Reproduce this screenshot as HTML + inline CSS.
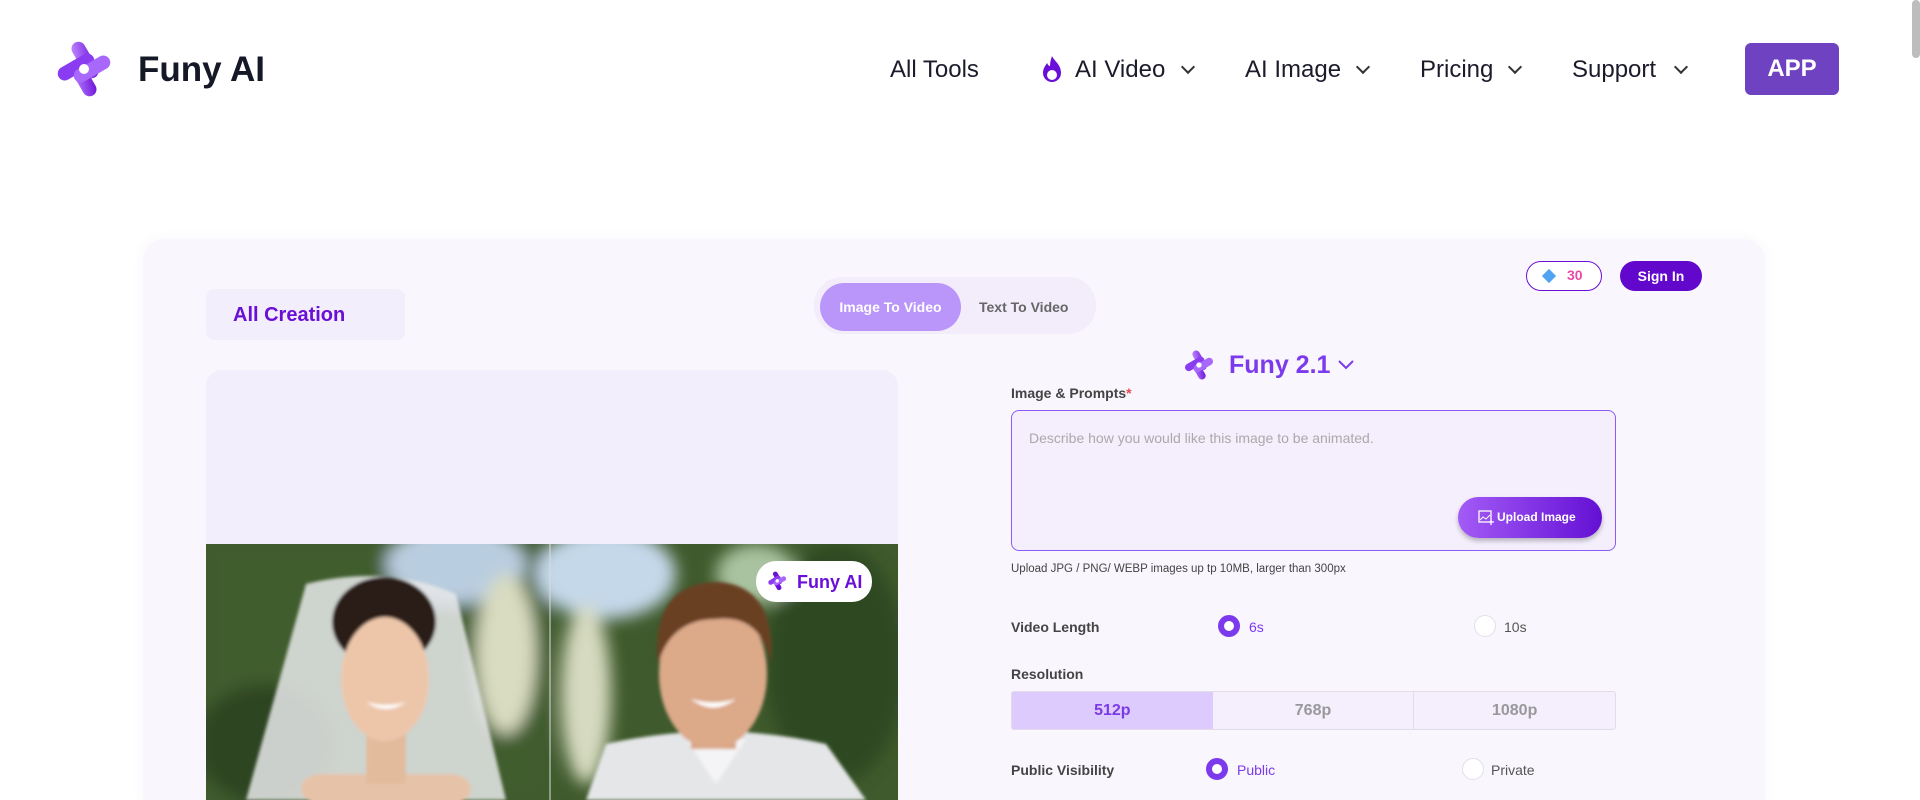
<!DOCTYPE html>
<html><head><meta charset="utf-8"><style>
*{box-sizing:border-box;margin:0;padding:0}
html{width:1920px;height:800px;overflow:hidden}
body{width:1920px;height:800px;overflow:hidden;background:#fff;font-family:"Liberation Sans",sans-serif;position:relative;color:#1a1a2e}
.a{position:absolute}
.nav{font-size:24px;font-weight:500;color:#1b1b2b;top:56px;white-space:nowrap}
.chev{position:absolute;width:10px;height:10px;border-right:2px solid #333;border-bottom:2px solid #333;transform:rotate(45deg);top:62px}
.lbl{font-size:14px;font-weight:bold;color:#444}
.radio{position:absolute;width:22px;height:22px;border-radius:50%;background:#fff;border:1px solid #e3e0ea}
.radio.on{border:6px solid #7c3aed;background:#fff}
</style></head><body>
<div class="a" style="right:0;top:0;width:8px;height:58px;background:#bdbdbd;border-radius:4px"></div>
<svg class="a" style="left:54px;top:40px" width="60" height="58" viewBox="0 0 60 58">
<defs><linearGradient id="lg" x1="0" y1="0" x2="1" y2="1"><stop offset="0" stop-color="#c18cff"/><stop offset="1" stop-color="#6a0fd9"/></linearGradient></defs>
<rect x="24" y="0" width="14" height="40" rx="7" transform="rotate(-30 31 20)" fill="url(#lg)"/>
<rect x="22" y="18" width="14" height="40" rx="7" transform="rotate(-30 29 38)" fill="url(#lg)"/>
<rect x="2" y="20" width="40" height="14" rx="7" transform="rotate(-30 22 27)" fill="#8a3cf0"/>
<rect x="18" y="22" width="40" height="14" rx="7" transform="rotate(-30 38 29)" fill="#a868fb"/>
<circle cx="30" cy="29" r="5" fill="#fff"/></svg>
<div class="a" style="left:138px;top:50px;font-size:35px;font-weight:600;color:#141827">Funy AI</div>
<div class="a nav" style="left:890px">All Tools</div>
<svg class="a" style="left:1038px;top:54px" width="28" height="32" viewBox="0 0 28 32"><path d="M14 2c2 5 9 8 9 17a9 9 0 0 1-18 0c0-5 3-8 4-10 1 2 2 3 3 3 0-4 1-7 2-10z" fill="#6a0fd9"/><circle cx="14" cy="21" r="5" fill="#fff"/></svg>
<div class="a nav" style="left:1075px">AI Video</div><div class="chev" style="left:1183px"></div>
<div class="a nav" style="left:1245px">AI Image</div><div class="chev" style="left:1358px"></div>
<div class="a nav" style="left:1420px">Pricing</div><div class="chev" style="left:1510px"></div>
<div class="a nav" style="left:1572px">Support</div><div class="chev" style="left:1676px"></div>
<div class="a" style="left:1745px;top:43px;width:94px;height:52px;background:#6f42c1;border-radius:6px;color:#fff;font-size:24px;font-weight:bold;text-align:center;line-height:52px">APP</div>
<div class="a" style="left:143px;top:239px;width:1622px;height:561px;background:#f9f6fd;border-radius:22px 22px 0 0;box-shadow:0 0 12px rgba(120,90,180,0.06)"></div>
<div class="a" style="left:206px;top:289px;width:199px;height:51px;background:#f3eefc;border-radius:8px;color:#6a0fd6;font-size:20px;font-weight:bold;padding:15px 0 0 27px">All Creation</div>
<div class="a" style="left:814px;top:277px;width:282px;height:57px;background:#f2ecfb;border-radius:28px"></div>
<div class="a" style="left:820px;top:283px;width:141px;height:48px;background:#bb96fa;border-radius:24px;color:#fff;font-size:14px;font-weight:bold;text-align:center;line-height:48px">Image To Video</div>
<div class="a" style="left:979px;top:299px;color:#666;font-size:14px;font-weight:bold">Text To Video</div>
<div class="a" style="left:1526px;top:261px;width:76px;height:30px;border:1.5px solid #6a10d6;border-radius:15px;background:#fff;font-size:14px;font-weight:bold;color:#e84aa6;line-height:27px;padding-left:40px"><span style="position:absolute;left:17px;top:9px;width:10px;height:10px;background:#4fa3f0;transform:rotate(45deg)"></span>30</div>
<div class="a" style="left:1620px;top:261px;width:82px;height:30px;background:#6207cc;border-radius:15px;color:#fff;font-size:14px;font-weight:bold;text-align:center;line-height:30px">Sign In</div>
<svg class="a" style="left:1183px;top:349px" width="32" height="32" viewBox="0 0 60 58"><rect x="24" y="0" width="14" height="40" rx="7" transform="rotate(-30 31 20)" fill="url(#lg)"/><rect x="22" y="18" width="14" height="40" rx="7" transform="rotate(-30 29 38)" fill="url(#lg)"/><rect x="2" y="20" width="40" height="14" rx="7" transform="rotate(-30 22 27)" fill="#8a3cf0"/><rect x="18" y="22" width="40" height="14" rx="7" transform="rotate(-30 38 29)" fill="#a868fb"/><circle cx="30" cy="29" r="5" fill="#fff"/></svg>
<div class="a" style="left:1229px;top:351px;font-size:25px;font-weight:bold;color:#7c3aed">Funy 2.1</div>
<svg class="a" style="left:1337px;top:359px" width="18" height="12"><path d="M2 2l7 7 7-7" stroke="#7c3aed" stroke-width="2" fill="none"/></svg>
<div class="a lbl" style="left:1011px;top:385px">Image &amp; Prompts<span style="color:#e5484d">*</span></div>
<div class="a" style="left:1011px;top:410px;width:605px;height:141px;border:1.5px solid #8b5cf6;border-radius:8px;background:#f4eefd"></div>
<div class="a" style="left:1029px;top:430px;font-size:14px;color:#aaa">Describe how you would like this image to be animated.</div>
<div class="a" style="left:1458px;top:497px;width:144px;height:41px;border-radius:21px;background:linear-gradient(90deg,#a35bf6,#6410d4);box-shadow:0 3px 5px rgba(0,0,0,0.25);color:#fff;font-size:12px;font-weight:bold;line-height:41px;padding-left:39px"><svg style="position:absolute;left:20px;top:12px" width="16" height="16" viewBox="0 0 16 16"><rect x="1" y="2" width="12" height="11" fill="none" stroke="#fff" stroke-width="1.3"/><path d="M2 11l3-3 3 2 4-4" stroke="#fff" fill="none"/><path d="M13 11v5M11 13h5" stroke="#fff" stroke-width="1.3"/></svg>Upload Image</div>
<div class="a" style="left:1011px;top:563px;font-size:11.5px;color:#444">Upload JPG / PNG/ WEBP images up tp 10MB, larger than 300px</div>
<div class="a lbl" style="left:1011px;top:619px">Video Length</div>
<div class="radio on" style="left:1218px;top:615px"></div><div class="a" style="left:1249px;top:619px;font-size:14px;color:#7c3aed">6s</div>
<div class="radio" style="left:1474px;top:615px"></div><div class="a" style="left:1504px;top:619px;font-size:14px;color:#555">10s</div>
<div class="a lbl" style="left:1011px;top:666px">Resolution</div>
<div class="a" style="left:1011px;top:691px;width:605px;height:39px;border:1px solid #e2dce9;border-radius:3px;background:#f4eefd;display:flex;font-size:16px;font-weight:bold;color:#999;line-height:37px;text-align:center">
<div style="flex:1;background:#dccbfc;color:#7b3ae8">512p</div><div style="flex:1;border-right:1px solid #e2dce9">768p</div><div style="flex:1">1080p</div></div>
<div class="a lbl" style="left:1011px;top:762px">Public Visibility</div>
<div class="radio on" style="left:1206px;top:758px"></div><div class="a" style="left:1237px;top:762px;font-size:14px;color:#7c3aed">Public</div>
<div class="radio" style="left:1462px;top:758px"></div><div class="a" style="left:1491px;top:762px;font-size:14px;color:#555">Private</div>
<div class="a" style="left:206px;top:370px;width:692px;height:430px;background:#f3eefc;border-radius:16px 16px 0 0"></div>
<svg class="a" style="left:206px;top:544px" width="692" height="256" viewBox="0 0 692 256">
<defs><filter id="bl"><feGaussianBlur stdDeviation="8"/></filter><filter id="b2"><feGaussianBlur stdDeviation="1.5"/></filter></defs>
<rect width="692" height="256" fill="#3f5a2c"/>
<g filter="url(#bl)">
<rect x="0" y="0" width="344" height="256" fill="#405d2d"/>
<ellipse cx="250" cy="20" rx="70" ry="40" fill="#b9cde0"/>
<ellipse cx="300" cy="110" rx="30" ry="80" fill="#d9dcc0"/>
<ellipse cx="60" cy="200" rx="70" ry="60" fill="#2e4420"/>
<ellipse cx="400" cy="30" rx="70" ry="45" fill="#c4d8ea"/>
<ellipse cx="380" cy="150" rx="25" ry="90" fill="#d6dac0"/>
<ellipse cx="630" cy="120" rx="70" ry="120" fill="#2f4a24"/>
<ellipse cx="550" cy="30" rx="40" ry="30" fill="#a9c3a0"/>
</g>
<line x1="344" y1="0" x2="344" y2="256" stroke="#ddd" stroke-width="1"/>
<g filter="url(#b2)">
<path d="M100 40 Q180 20 250 50 L300 256 L40 256 Z" fill="#e7e9ea" opacity="0.85"/>
<ellipse cx="178" cy="78" rx="52" ry="45" fill="#2a1d18"/>
<rect x="95" y="230" width="170" height="30" rx="20" fill="#e6c3a8"/>
<rect x="160" y="180" width="40" height="60" fill="#e2bb9c"/>
<ellipse cx="179" cy="135" rx="44" ry="62" fill="#edc6aa"/>
<path d="M160 158 Q180 172 200 158 Q180 164 160 158" fill="#fff"/>
<path d="M380 256 L400 200 Q510 175 620 200 L660 256 Z" fill="#e4e6e8"/>
<path d="M480 195 L510 240 L540 195 Z" fill="#f4f4f6"/>
<rect x="485" y="160" width="45" height="45" fill="#d9a484"/>
<ellipse cx="507" cy="130" rx="54" ry="75" fill="#dca989"/>
<path d="M452 120 Q445 40 510 38 Q570 40 565 120 Q555 70 510 75 Q465 75 452 120Z" fill="#6b3f22"/>
<path d="M485 155 Q507 172 530 155 Q507 162 485 155" fill="#fff"/>
</g>
<rect x="550" y="17" width="116" height="41" rx="20" fill="#fff"/>
<g transform="translate(561,27) scale(0.34)"><rect x="24" y="0" width="14" height="40" rx="7" transform="rotate(-30 31 20)" fill="#6a0fd9"/><rect x="22" y="18" width="14" height="40" rx="7" transform="rotate(-30 29 38)" fill="#6a0fd9"/><rect x="2" y="20" width="40" height="14" rx="7" transform="rotate(-30 22 27)" fill="#8a3cf0"/><rect x="18" y="22" width="40" height="14" rx="7" transform="rotate(-30 38 29)" fill="#a868fb"/><circle cx="30" cy="29" r="5" fill="#fff"/></g>
<text x="591" y="44" font-family="Liberation Sans" font-size="18" font-weight="bold" fill="#6a0fd9">Funy AI</text>
</svg>
</body></html>
